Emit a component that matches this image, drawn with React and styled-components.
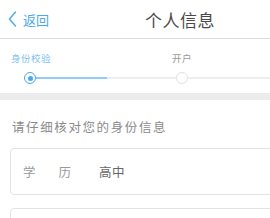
import React from "react";
import styled, { createGlobalStyle } from "styled-components";

const Global = createGlobalStyle`
  html, body { margin: 0; padding: 0; background: #fff; overflow: hidden; }
  body { font-family: "Noto Sans CJK SC", "Noto Sans", sans-serif; }
`;

const Page = styled.div`
  width: 360px;
  background: #fff;
`;

const Header = styled.div`
  height: 38px;
  display: flex;
  align-items: center;
  position: relative;
  border-bottom: 1px solid #dcdcdc;
`;

const Back = styled.div`
  display: flex;
  align-items: center;
  gap: 6px;
  padding-left: 8px;
  color: #4aa8ee;
  font-size: 13px;
  height: 100%;
  svg { display: block; }
`;

const Title = styled.div`
  position: absolute;
  left: 0;
  right: 0;
  top: 0;
  bottom: 0;
  display: flex;
  align-items: center;
  justify-content: center;
  font-size: 17px;
  color: #4a4a4a;
  letter-spacing: 0.5px;
  pointer-events: none;
`;

const Steps = styled.div`
  display: grid;
  grid-template-columns: 152px 152px 56px;
  padding: 12px 0 8px 0;
`;

const Step = styled.div`
  display: flex;
  flex-direction: column;
`;

const StepLabel = styled.div`
  font-size: 9.5px;
  letter-spacing: 0.5px;
  color: ${(p) => (p.$active ? "#7cc2f5" : "#999")};
  padding-left: ${(p) => p.$indent}px;
  height: 14px;
  line-height: 14px;
`;

const Track = styled.div`
  display: flex;
  align-items: center;
  height: 14px;
  margin-top: 6px;
  padding-left: ${(p) => p.$indent || 0}px;
`;

const Line = styled.div`
  flex: ${(p) => (p.$width ? "none" : "1")};
  width: ${(p) => (p.$width ? `${p.$width}px` : "auto")};
  height: 2px;
  background: ${(p) => (p.$active ? "#8fcdf7" : "#eeeeee")};
`;

const Dot = styled.div`
  width: 12px;
  height: 12px;
  border-radius: 50%;
  box-sizing: border-box;
  flex: none;
  border: 1.5px solid ${(p) => (p.$active ? "#4aa8ee" : "#e2e2e2")};
  background: #fff;
  display: flex;
  align-items: center;
  justify-content: center;
  &::after {
    content: "";
    width: 5px;
    height: 5px;
    border-radius: 50%;
    background: ${(p) => (p.$active ? "#4aa8ee" : "transparent")};
  }
`;

const Band = styled.div`
  height: 7px;
  background: #ececec;
`;

const Body = styled.div`
  padding: 0 10px;
`;

const Hint = styled.div`
  font-size: 12.5px;
  letter-spacing: 1.6px;
  color: #8a8a8a;
  padding: 19px 0 0 2px;
  height: 29px;
  line-height: 16px;
`;

const Card = styled.div`
  height: 47px;
  border: 1px solid #e3e3e3;
  border-radius: 4px;
  box-sizing: border-box;
  display: flex;
  align-items: center;
  padding-left: 12px;
  margin-bottom: 13px;
  font-size: 12.5px;
`;

const Label = styled.span`
  display: flex;
  gap: 23px;
  color: #9a9a9a;
`;

const Value = styled.span`
  color: #666;
  letter-spacing: 0.5px;
  margin-left: 28px;
`;

export default function App() {
  return (
    <>
      <Global />
      <Page>
        <Header>
          <Back>
            <svg width="9" height="16" viewBox="0 0 9 16">
              <path d="M7.5 1 L1.5 8 L7.5 15" fill="none" stroke="#4aa8ee" strokeWidth="1.4" strokeLinecap="round" strokeLinejoin="round" />
            </svg>
            <span>返回</span>
          </Back>
          <Title>个人信息</Title>
        </Header>
        <Steps>
          <Step>
            <StepLabel $active $indent={11}>身份校验</StepLabel>
            <Track $indent={24}>
              <Dot $active />
              <Line $active $width={71} />
              <Line />
            </Track>
          </Step>
          <Step>
            <StepLabel $indent={20}>开户</StepLabel>
            <Track>
              <Line $width={24} />
              <Dot />
              <Line />
            </Track>
          </Step>
          <Step>
            <StepLabel />
            <Track>
              <Line />
            </Track>
          </Step>
        </Steps>
        <Band />
        <Body>
          <Hint>请仔细核对您的身份信息</Hint>
          <Card>
            <Label>
              <span>学</span>
              <span>历</span>
            </Label>
            <Value>高中</Value>
          </Card>
          <Card />
        </Body>
      </Page>
    </>
  );
}
